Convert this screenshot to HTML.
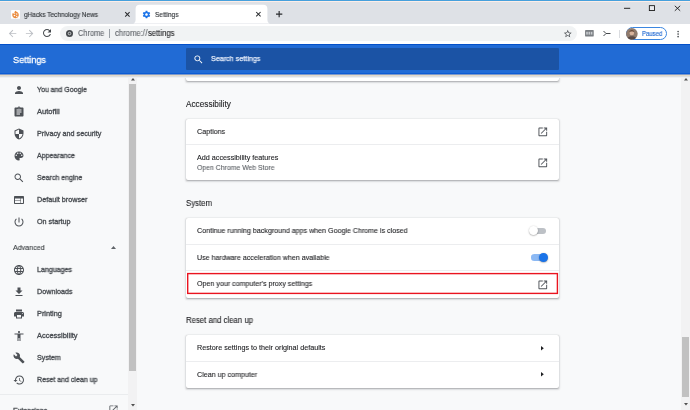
<!DOCTYPE html>
<html><head><meta charset="utf-8"><title>Settings</title>
<style>
html,body{margin:0;padding:0;}
body{width:690px;height:410px;overflow:hidden;position:relative;background:#f8f9fa;font-family:"Liberation Sans",sans-serif;color:#202124;}
.a{position:absolute;}
.t{position:absolute;white-space:nowrap;line-height:10px;height:10px;transform-origin:0 50%;will-change:transform;}
svg{position:absolute;display:block;overflow:visible;}
#topline{left:0;top:0;width:690px;height:2px;background:linear-gradient(#47a0dc 0,#47a0dc 1px,#fdeee8 1px);}
#tabbar{left:0;top:1px;width:690px;height:23px;background:#dee1e6;}

#toolbar{left:0;top:23.5px;width:690px;height:20.5px;background:#fff;}
#omni{left:59.6px;top:25.9px;width:517.4px;height:15px;border-radius:8px;background:#f1f3f4;}
#hdr{left:0;top:44px;width:690px;height:30px;background:linear-gradient(#0450c9 0,#0450c9 1px,#216bd5 1px,#216bd5 29px,#0b5cd5 29px);}
#hdr2{left:0;top:74px;width:690px;height:2px;background:linear-gradient(#7d98c8 0,#7d98c8 1px,#e3d9c7 1px);}
#hdr3{left:0;top:76px;width:690px;height:2px;background:linear-gradient(#dcdee1 0,#dcdee1 1px,#eef0f2 1px);}
#srch{left:186px;top:48px;width:373px;height:21.5px;background:#1b53a5;border-radius:1px;}
.sb{background:#f2f2f3;}
.th{background:#c1c1c1;}
.card{background:#fff;border-radius:2px;box-shadow:0 0.55px 1.1px rgba(60,64,67,.28),0 0.55px 1.65px 0.55px rgba(60,64,67,.13);}
.sep{background:#ecedef;height:1px;}
.ic{fill:#5f6368;}
</style></head><body>
<div class="a" id="tabbar"></div>
<div class="a" id="topline"></div>
<svg style="left:0;top:0" width="690" height="24" viewBox="0 0 690 24"><path d="M131.600 23.600C134.100 23.600 135.600 22.200 135.600 19.700V8.800C135.600 6.300 137.100 4.800 139.600 4.800H263.400C265.900 4.800 267.400 6.300 267.400 8.800V19.700C267.400 22.200 268.900 23.600 271.400 23.600Z" fill="#fff"/></svg>
<div class="a" id="toolbar"></div>
<div class="a" id="omni"></div>

<!-- main cards -->
<div class="a card" style="left:185.8px;top:60px;width:373.4px;height:20.6px;"></div>
<div class="a card" style="left:185.8px;top:118.5px;width:373.4px;height:61.1px;"></div>
<div class="a sep" style="left:186px;top:144.3px;width:373px;"></div>
<div class="a card" style="left:185.8px;top:217.5px;width:373.4px;height:80px;"></div>
<div class="a sep" style="left:186px;top:244.1px;width:373px;"></div>
<div class="a sep" style="left:186px;top:270px;width:373px;"></div>
<svg style="left:0;top:0" width="690" height="410" viewBox="0 0 690 410"><rect x="187.7" y="273.6" width="369.7" height="19.8" fill="none" stroke="#ea1420" stroke-width="1.4"/></svg>
<div class="a card" style="left:185.8px;top:334.5px;width:373.4px;height:53px;"></div>
<div class="a sep" style="left:186px;top:360.8px;width:373px;"></div>

<div class="a" id="hdr"></div><div class="a" id="hdr2"></div><div class="a" id="hdr3"></div>
<div class="a" id="srch"></div>
<div class="a" style="left:109px;top:29px;width:1px;height:9px;background:#9aa0a6;"></div>
<div class="a sep" style="left:0;top:394.2px;width:128.3px;background:#eaecee;"></div>

<!-- ICONS -->
<svg style="left:12.9px;top:83.7px" width="12" height="12" viewBox="0 0 24 24"><path fill="#4d5156" d="M12 12c2.21 0 4-1.79 4-4s-1.79-4-4-4-4 1.79-4 4 1.79 4 4 4zm0 2c-2.67 0-8 1.34-8 4v2h16v-2c0-2.66-5.33-4-8-4z"/></svg>
<svg style="left:12.9px;top:105.7px" width="12" height="12" viewBox="0 0 24 24"><path fill="#4d5156" d="M19 3h-4.18C14.4 1.84 13.3 1 12 1c-1.3 0-2.4.84-2.82 2H5c-1.1 0-2 .9-2 2v14c0 1.1.9 2 2 2h14c1.1 0 2-.9 2-2V5c0-1.1-.9-2-2-2zm-7 0c.55 0 1 .45 1 1s-.45 1-1 1-1-.45-1-1 .45-1 1-1zm2 14H7v-2h7v2zm3-4H7v-2h10v2zm0-4H7V7h10v2z"/></svg>
<svg style="left:12.9px;top:127.7px" width="12" height="12" viewBox="0 0 24 24"><path fill="#4d5156" d="M12 1L3 5v6c0 5.55 3.84 10.74 9 12 5.16-1.26 9-6.45 9-12V5l-9-4zm0 10.99h7c-.53 4.12-3.28 7.79-7 8.94V12H5V6.3l7-3.11v8.8z"/></svg>
<svg style="left:12.9px;top:149.7px" width="12" height="12" viewBox="0 0 24 24"><path fill="#4d5156" d="M12 3c-4.97 0-9 4.03-9 9s4.03 9 9 9c.83 0 1.5-.67 1.5-1.5 0-.39-.15-.74-.39-1.01-.23-.26-.38-.61-.38-.99 0-.83.67-1.5 1.5-1.5H16c2.76 0 5-2.24 5-5 0-4.42-4.03-8-9-8zm-5.5 9c-.83 0-1.5-.67-1.5-1.5S5.67 9 6.5 9 8 9.67 8 10.5 7.33 12 6.5 12zm3-4C8.67 8 8 7.33 8 6.5S8.67 5 9.5 5s1.5.67 1.5 1.5S10.33 8 9.5 8zm5 0c-.83 0-1.5-.67-1.5-1.5S13.67 5 14.5 5s1.5.67 1.5 1.5S15.33 8 14.5 8zm3 4c-.83 0-1.5-.67-1.5-1.5S16.67 9 17.5 9s1.5.67 1.5 1.5-.67 1.5-1.5 1.5z"/></svg>
<svg style="left:12.9px;top:171.7px" width="12" height="12" viewBox="0 0 24 24"><path fill="#4d5156" d="M15.5 14h-.79l-.28-.27C15.41 12.59 16 11.11 16 9.5 16 5.91 13.09 3 9.5 3S3 5.91 3 9.5 5.91 16 9.5 16c1.61 0 3.09-.59 4.23-1.57l.27.28v.79l5 4.99L20.49 19l-4.99-5zm-6 0C7.01 14 5 11.99 5 9.5S7.01 5 9.5 5 14 7.01 14 9.5 11.99 14 9.5 14z"/></svg>
<svg style="left:12.9px;top:193.7px" width="12" height="12" viewBox="0 0 24 24"><path fill="#4d5156" d="M20 4H4c-1.1 0-1.99.9-1.99 2L2 18c0 1.1.9 2 2 2h16c1.1 0 2-.9 2-2V6c0-1.1-.9-2-2-2zm-5 14H4v-4h11v4zm0-5H4V9h11v4zm5 5h-4V9h4v9z"/></svg>
<svg style="left:12.9px;top:215.7px" width="12" height="12" viewBox="0 0 24 24"><path fill="#4d5156" d="M13 3h-2v10h2V3zm4.83 2.17l-1.42 1.42C17.99 7.86 19 9.81 19 12c0 3.87-3.13 7-7 7s-7-3.13-7-7c0-2.19 1.01-4.14 2.58-5.42L6.17 5.17C4.23 6.82 3 9.26 3 12c0 4.97 4.03 9 9 9s9-4.03 9-9c0-2.74-1.23-5.18-3.17-6.83z"/></svg>
<svg style="left:12.9px;top:263.7px" width="12" height="12" viewBox="0 0 24 24"><path fill="#4d5156" d="M11.99 2C6.47 2 2 6.48 2 12s4.47 10 9.99 10C17.52 22 22 17.52 22 12S17.52 2 11.99 2zm6.93 6h-2.95c-.32-1.25-.78-2.45-1.38-3.56 1.84.63 3.37 1.91 4.33 3.56zM12 4.04c.83 1.2 1.48 2.53 1.91 3.96h-3.82c.43-1.43 1.08-2.76 1.91-3.96zM4.26 14C4.1 13.36 4 12.69 4 12s.1-1.36.26-2h3.38c-.08.66-.14 1.32-.14 2 0 .68.06 1.34.14 2H4.26zm.82 2h2.95c.32 1.25.78 2.45 1.38 3.56-1.84-.63-3.37-1.9-4.33-3.56zm2.95-8H5.08c.96-1.66 2.49-2.93 4.33-3.56C8.81 5.55 8.35 6.75 8.03 8zM12 19.96c-.83-1.2-1.48-2.53-1.91-3.96h3.82c-.43 1.43-1.08 2.76-1.91 3.96zM14.34 14H9.66c-.09-.66-.16-1.32-.16-2 0-.68.07-1.35.16-2h4.68c.09.65.16 1.32.16 2 0 .68-.07 1.34-.16 2zm.25 5.56c.6-1.11 1.06-2.31 1.38-3.56h2.95c-.96 1.65-2.49 2.93-4.33 3.56zM16.36 14c.08-.66.14-1.32.14-2 0-.68-.06-1.34-.14-2h3.38c.16.64.26 1.31.26 2s-.1 1.36-.26 2h-3.38z"/></svg>
<svg style="left:12.9px;top:285.7px" width="12" height="12" viewBox="0 0 24 24"><path fill="#4d5156" d="M19 9h-4V3H9v6H5l7 7 7-7zM5 18v2h14v-2H5z"/></svg>
<svg style="left:12.9px;top:307.7px" width="12" height="12" viewBox="0 0 24 24"><path fill="#4d5156" d="M19 8H5c-1.66 0-3 1.34-3 3v6h4v4h12v-4h4v-6c0-1.66-1.34-3-3-3zm-3 11H8v-5h8v5zm3-7c-.55 0-1-.45-1-1s.45-1 1-1 1 .45 1 1-.45 1-1 1zm-1-9H6v4h12V3z"/></svg>
<svg style="left:12.9px;top:329.7px" width="12" height="12" viewBox="0 0 24 24"><path fill="#4d5156" d="M12 2c1.1 0 2 .9 2 2s-.9 2-2 2-2-.9-2-2 .9-2 2-2zm9 7h-6v13h-2v-6h-2v6H9V9H3V7h18v2z"/></svg>
<svg style="left:12.9px;top:351.7px" width="12" height="12" viewBox="0 0 24 24"><path fill="#4d5156" d="M22.7 19l-9.1-9.1c.9-2.3.4-5-1.5-6.9-2-2-5-2.4-7.4-1.3L9 6 6 9 1.6 4.700C.4 7.1.9 10.1 2.9 12.1c1.900 1.900 4.600 2.400 6.900 1.500l9.100 9.100c.4.400 1 .400 1.400 0l2.300-2.300c.500-.400.500-1.100.100-1.400z"/></svg>
<svg style="left:12.9px;top:373.7px" width="12" height="12" viewBox="0 0 24 24"><path fill="#4d5156" d="M13 3c-4.970 0-9 4.030-9 9H1l3.890 3.890.07.140L9 12H6c0-3.870 3.130-7 7-7s7 3.130 7 7-3.130 7-7 7c-1.930 0-3.680-.790-4.940-2.060l-1.420 1.420C8.270 19.990 10.510 21 13 21c4.970 0 9-4.030 9-9s-4.030-9-9-9zm-1 5v5l4.280 2.540.72-1.210-3.500-2.080V8H12z"/></svg>
<svg style="left:536.9px;top:126.3px" width="11.6" height="11.6" viewBox="0 0 24 24"><path fill="#50545a" d="M19 19H5V5h7V3H5c-1.110 0-2 .9-2 2v14c0 1.100.89 2 2 2h14c1.100 0 2-.9 2-2v-7h-2v7zM14 3v2h3.590l-9.830 9.830 1.410 1.410L19 6.410V10h2V3h-7z"/></svg>
<svg style="left:536.9px;top:157.1px" width="11.6" height="11.6" viewBox="0 0 24 24"><path fill="#50545a" d="M19 19H5V5h7V3H5c-1.110 0-2 .9-2 2v14c0 1.100.89 2 2 2h14c1.100 0 2-.9 2-2v-7h-2v7zM14 3v2h3.590l-9.830 9.830 1.410 1.410L19 6.410V10h2V3h-7z"/></svg>
<svg style="left:536.9px;top:278.6px" width="11.6" height="11.6" viewBox="0 0 24 24"><path fill="#50545a" d="M19 19H5V5h7V3H5c-1.110 0-2 .9-2 2v14c0 1.100.89 2 2 2h14c1.100 0 2-.9 2-2v-7h-2v7zM14 3v2h3.590l-9.830 9.830 1.410 1.410L19 6.410V10h2V3h-7z"/></svg>
<svg style="left:108.1px;top:404.2px" width="11" height="11" viewBox="0 0 24 24"><path fill="#5f6368" d="M19 19H5V5h7V3H5c-1.110 0-2 .9-2 2v14c0 1.100.89 2 2 2h14c1.100 0 2-.9 2-2v-7h-2v7zM14 3v2h3.590l-9.830 9.830 1.410 1.410L19 6.410V10h2V3h-7z"/></svg>
<svg style="left:540.8px;top:345.6px" width="2.8" height="4.4" viewBox="0 0 2.8 4.4"><path d="M0 0L2.8 2.2L0 4.4z" fill="#202124"/></svg>
<svg style="left:540.8px;top:372.1px" width="2.8" height="4.4" viewBox="0 0 2.8 4.4"><path d="M0 0L2.8 2.2L0 4.4z" fill="#202124"/></svg>
<svg style="left:111px;top:246px" width="5" height="3" viewBox="0 0 5 3"><path d="M0 3L2.5 0L5 3z" fill="#5f6368"/></svg>
<svg style="left:192.5px;top:53.5px" width="11" height="11" viewBox="0 0 24 24"><path fill="#fff" d="M15.5 14h-.79l-.28-.27C15.41 12.59 16 11.11 16 9.5 16 5.91 13.09 3 9.5 3S3 5.91 3 9.5 5.91 16 9.5 16c1.61 0 3.09-.59 4.23-1.57l.27.28v.79l5 4.99L20.49 19l-4.99-5zm-6 0C7.01 14 5 11.99 5 9.5S7.01 5 9.5 5 14 7.01 14 9.5 11.99 14 9.5 14z"/></svg>
<svg style="left:6.5px;top:27.9px" width="11.2" height="11.2" viewBox="0 0 24 24"><path fill="#bcbfc4" d="M20 11H7.830l5.590-5.590L12 4l-8 8 8 8 1.410-1.410L7.830 13H20v-2z"/></svg>
<svg style="left:24.0px;top:27.9px" width="11.2" height="11.2" viewBox="0 0 24 24"><path fill="#bcbfc4" d="M12 4l-1.410 1.410L16.170 11H4v2h12.170l-5.580 5.590L12 20l8-8z"/></svg>
<svg style="left:41.0px;top:27.4px" width="12" height="12" viewBox="0 0 24 24"><path fill="#45494d" d="M17.650 6.350C16.200 4.900 14.210 4 12 4c-4.420 0-7.990 3.580-7.990 8s3.570 8 7.990 8c3.730 0 6.840-2.550 7.730-6h-2.080c-.820 2.330-3.040 4-5.650 4-3.310 0-6-2.690-6-6s2.690-6 6-6c1.660 0 3.140.690 4.220 1.780L13 11h7V4l-2.350 2.350z"/></svg>
<svg style="left:562.5px;top:28.9px" width="9.5" height="9.5" viewBox="0 0 24 24"><path fill="#45494d" d="M22 9.240l-7.190-.620L12 2 9.190 8.630 2 9.240l5.460 4.730L5.820 21 12 17.270 18.180 21l-1.630-7.030L22 9.240zM12 15.400l-3.760 2.270 1-4.280-3.320-2.880 4.380-.380L12 6.100l1.710 4.040 4.380.380-3.320 2.880 1 4.280L12 15.400z"/></svg>
<svg style="left:672.9px;top:28.5px" width="10.2" height="10.2" viewBox="0 0 24 24"><path fill="#45494d" d="M12 8c1.100 0 2-.9 2-2s-.9-2-2-2-2 .9-2 2 .9 2 2 2zm0 2c-1.100 0-2 .9-2 2s.9 2 2 2 2-.9 2-2-.9-2-2-2zm0 6c-1.100 0-2 .9-2 2s.9 2 2 2 2-.9 2-2-.9-2-2-2z"/></svg>
<svg style="left:141.9px;top:9.6px" width="9" height="9" viewBox="0 0 24 24"><path fill="#1a73e8" d="M19.430 12.980c.040-.320.070-.640.070-.980s-.030-.660-.070-.980l2.110-1.650c.190-.150.240-.420.120-.640l-2-3.460c-.120-.220-.390-.300-.610-.220l-2.490 1c-.520-.400-1.080-.730-1.690-.980l-.380-2.650C14.460 2.180 14.250 2 14 2h-4c-.250 0-.460.180-.490.420l-.380 2.650c-.610.250-1.170.590-1.690.980l-2.490-1c-.230-.090-.490 0-.610.220l-2 3.460c-.130.220-.070.490.120.640l2.110 1.650c-.040.320-.070.650-.070.980s.030.660.070.980l-2.110 1.650c-.190.150-.240.420-.120.640l2 3.460c.120.220.390.300.610.220l2.490-1c.520.400 1.080.730 1.690.980l.380 2.650c.030.240.240.420.490.420h4c.250 0 .460-.180.490-.420l.380-2.650c.610-.250 1.170-.590 1.690-.980l2.490 1c.230.090.490 0 .610-.220l2-3.460c.120-.220.070-.490-.120-.640l-2.110-1.650zM12 15.500c-1.930 0-3.500-1.570-3.500-3.500s1.570-3.500 3.500-3.500 3.500 1.570 3.500 3.500-1.570 3.500-3.500 3.500z"/></svg>
<svg style="left:65.5px;top:29.9px" width="7" height="7" viewBox="0 0 14 14"><circle cx="7" cy="7" r="7" fill="#45494d"/><circle cx="7" cy="7" r="2.6" fill="none" stroke="#f1f3f4" stroke-width="1.4"/></svg>
<svg style="left:11px;top:9.8px" width="9" height="8.8" viewBox="0 0 18 17.6"><rect width="18" height="17.600" rx="1" fill="#fff"/><path d="M9 1.500c1 1.500 3 2 4.500 3.500 2 2 2.500 5 1.500 7.500-1 2.500-3.500 4-6 4s-5-1.500-6-4c-1-2.500-.5-5 1-7 .5 1.500 1.500 2 2.500 2 0-2.500 1-4.500 2.500-6z" fill="#ea8a3c"/><circle cx="7" cy="11" r="1.700" fill="#fff"/><circle cx="11.500" cy="8" r="1.400" fill="#fff"/><circle cx="11.500" cy="13" r="1.300" fill="#fff"/><circle cx="7.500" cy="6.500" r="1" fill="#fff"/></svg>
<svg style="left:0;top:0" width="690" height="24" viewBox="0 0 690 24"><path d="M624 8.3H630.2" stroke="#1b1b1b" stroke-width="0.95" fill="none"/><rect x="649.35" y="5.65" width="5.2" height="4.9" stroke="#1b1b1b" stroke-width="0.9" fill="#e8eaee"/><path d="M674.8 5.8L680.2 10.8M680.2 5.8L674.8 10.8" stroke="#1b1b1b" stroke-width="0.9" fill="none"/><path d="M125.2 12.2L129.6 16.6M129.6 12.2L125.2 16.6" stroke="#2a2c2f" stroke-width="1.05" fill="none"/><path d="M256.2 12L260.6 16.4M260.6 12L256.2 16.4" stroke="#2a2c2f" stroke-width="1.05" fill="none"/><path d="M276 14.1H282.3M279.15 10.95V17.25" stroke="#2a2c2f" stroke-width="1.15" fill="none"/></svg>
<svg style="left:584.6px;top:30.3px" width="8.8" height="6.4" viewBox="0 0 19 14"><rect width="19" height="14" rx="1" fill="#7b7f83"/><rect x="2.500" y="4" width="3.500" height="6" fill="#c9ccd0"/><rect x="7.500" y="4" width="3.500" height="6" fill="#c9ccd0"/><rect x="12.500" y="4" width="3.500" height="6" fill="#c9ccd0"/></svg>
<svg style="left:602.500px;top:30px" width="8" height="7" viewBox="0 0 16 14"><path d="M1 2L6 7L1 12M6 7H15" stroke="#45494d" stroke-width="2" fill="none"/></svg>
<div class="a" style="left:618.500px;top:29.500px;width:1px;height:8px;background:#dadce0;"></div>
<div class="a" style="left:625.6px;top:26.9px;width:39.1px;height:11.05px;border:0.9px solid #3b86e0;border-radius:7px;background:#fff;"></div>
<svg style="left:625.5px;top:27.5px" width="11.7" height="11.7" viewBox="0 0 20 20"><circle cx="10" cy="10" r="10" fill="#8f7a6c"/><circle cx="10" cy="8.500" r="4" fill="#d9b49c"/><path d="M3 17c1.500-4 12.500-4 14 0a10 10 0 0 1-14 0z" fill="#5a4a44"/><path d="M5.500 8c0-6 9-6 9 0c-1-2.500-8-2.500-9 0z" fill="#6a4a38"/></svg>

<div class="t" style="left:24.0px;top:10px;font-size:6.9px;color:#33373b;-webkit-text-stroke:0.15px #33373b;transform:scaleX(0.9393);">gHacks Technology News</div>
<div class="t" style="left:155.0px;top:10px;font-size:6.9px;color:#33373b;-webkit-text-stroke:0.15px #33373b;transform:scaleX(0.9435);">Settings</div>
<div class="t" style="left:78.2px;top:29px;font-size:8.2px;color:#5f6368;-webkit-text-stroke:0.12px #5f6368;transform:scaleX(0.9030);">Chrome</div>
<div class="t" style="left:115.0px;top:29px;font-size:8.2px;color:#5f6368;-webkit-text-stroke:0.12px #5f6368;transform:scaleX(0.9421);">chrome:<span style="letter-spacing:0.4px">//</span><span style="color:#202124;-webkit-text-stroke:0.1px #202124">settings</span></div>
<div class="t" style="left:641.8px;top:29px;font-size:7.1px;color:#1f68d2;-webkit-text-stroke:0.15px #1f68d2;transform:scaleX(0.8436);">Paused</div>
<div class="t" style="left:13.1px;top:55px;font-size:9.6px;color:#fff;-webkit-text-stroke:0.3px #fff;transform:scaleX(0.9518);">Settings</div>
<div class="t" style="left:210.9px;top:54px;font-size:7.4px;color:#e6edfa;-webkit-text-stroke:0.25px #e6edfa;transform:scaleX(0.9676);">Search settings</div>
<div class="t" style="left:37.4px;top:85px;font-size:7.2px;color:#484c51;-webkit-text-stroke:0.32px #484c51;transform:scaleX(0.9728);">You and Google</div>
<div class="t" style="left:37.4px;top:107px;font-size:7.2px;color:#484c51;-webkit-text-stroke:0.32px #484c51;transform:scaleX(1.0520);">Autofill</div>
<div class="t" style="left:37.4px;top:129px;font-size:7.2px;color:#484c51;-webkit-text-stroke:0.32px #484c51;transform:scaleX(0.9998);">Privacy and security</div>
<div class="t" style="left:37.4px;top:151px;font-size:7.2px;color:#484c51;-webkit-text-stroke:0.32px #484c51;transform:scaleX(0.9777);">Appearance</div>
<div class="t" style="left:37.4px;top:173px;font-size:7.2px;color:#484c51;-webkit-text-stroke:0.32px #484c51;transform:scaleX(0.9793);">Search engine</div>
<div class="t" style="left:37.4px;top:195px;font-size:7.2px;color:#484c51;-webkit-text-stroke:0.32px #484c51;transform:scaleX(1.0011);">Default browser</div>
<div class="t" style="left:37.4px;top:217px;font-size:7.2px;color:#484c51;-webkit-text-stroke:0.32px #484c51;transform:scaleX(1.0011);">On startup</div>
<div class="t" style="left:13.2px;top:243px;font-size:7.6px;color:#3c4043;-webkit-text-stroke:0.12px #3c4043;transform:scaleX(0.9384);">Advanced</div>
<div class="t" style="left:37.4px;top:265px;font-size:7.2px;color:#484c51;-webkit-text-stroke:0.32px #484c51;transform:scaleX(0.9809);">Languages</div>
<div class="t" style="left:37.4px;top:287px;font-size:7.2px;color:#484c51;-webkit-text-stroke:0.32px #484c51;transform:scaleX(0.9954);">Downloads</div>
<div class="t" style="left:37.4px;top:309px;font-size:7.2px;color:#484c51;-webkit-text-stroke:0.32px #484c51;transform:scaleX(1.0215);">Printing</div>
<div class="t" style="left:37.4px;top:331px;font-size:7.2px;color:#484c51;-webkit-text-stroke:0.32px #484c51;transform:scaleX(1.0369);">Accessibility</div>
<div class="t" style="left:37.4px;top:353px;font-size:7.2px;color:#484c51;-webkit-text-stroke:0.32px #484c51;transform:scaleX(0.9846);">System</div>
<div class="t" style="left:37.4px;top:375px;font-size:7.2px;color:#484c51;-webkit-text-stroke:0.32px #484c51;transform:scaleX(0.9752);">Reset and clean up</div>
<div class="t" style="left:13.2px;top:406px;font-size:7.2px;color:#484c51;-webkit-text-stroke:0.32px #484c51;transform:scaleX(0.9752);">Extensions</div>
<div class="t" style="left:186.0px;top:100px;font-size:8.2px;color:#202124;-webkit-text-stroke:0.1px #202124;transform:scaleX(1.0046);">Accessibility</div>
<div class="t" style="left:197.0px;top:127px;font-size:7.2px;color:#202124;-webkit-text-stroke:0.1px #202124;transform:scaleX(0.9903);">Captions</div>
<div class="t" style="left:197.0px;top:153px;font-size:7.2px;color:#202124;-webkit-text-stroke:0.1px #202124;transform:scaleX(1.0024);">Add accessibility features</div>
<div class="t" style="left:197.0px;top:163px;font-size:7.2px;color:#585c61;-webkit-text-stroke:0.1px #585c61;transform:scaleX(0.9572);">Open Chrome Web Store</div>
<div class="t" style="left:186.0px;top:199px;font-size:8.2px;color:#202124;-webkit-text-stroke:0.1px #202124;transform:scaleX(0.9519);">System</div>
<div class="t" style="left:197.0px;top:226px;font-size:7.2px;color:#202124;-webkit-text-stroke:0.1px #202124;transform:scaleX(0.9847);">Continue running background apps when Google Chrome is closed</div>
<div class="t" style="left:197.0px;top:253px;font-size:7.2px;color:#202124;-webkit-text-stroke:0.1px #202124;transform:scaleX(0.9811);">Use hardware acceleration when available</div>
<div class="t" style="left:197.0px;top:279px;font-size:7.2px;color:#202124;-webkit-text-stroke:0.1px #202124;transform:scaleX(0.9861);">Open your computer's proxy settings</div>
<div class="t" style="left:186.0px;top:316px;font-size:8.2px;color:#202124;-webkit-text-stroke:0.1px #202124;transform:scaleX(0.9495);">Reset and clean up</div>
<div class="t" style="left:197.0px;top:343px;font-size:7.2px;color:#202124;-webkit-text-stroke:0.1px #202124;transform:scaleX(1.0012);">Restore settings to their original defaults</div>
<div class="t" style="left:197.0px;top:370px;font-size:7.2px;color:#202124;-webkit-text-stroke:0.1px #202124;transform:scaleX(0.9912);">Clean up computer</div>

<!-- toggles -->
<div class="a" style="left:530.9px;top:227.5px;width:15.4px;height:6.6px;border-radius:3.3px;background:#bdc1c6;"></div>
<div class="a" style="left:529.2px;top:226.4px;width:8.8px;height:8.8px;border-radius:4.4px;background:#fff;box-shadow:0 0.5px 1.6px rgba(0,0,0,.4);"></div>
<div class="a" style="left:530.9px;top:254.1px;width:15.4px;height:6.6px;border-radius:3.3px;background:#8cb9f4;"></div>
<div class="a" style="left:539.2px;top:253px;width:8.8px;height:8.8px;border-radius:4.4px;background:#1a73e8;box-shadow:0 0.5px 1.6px rgba(0,0,0,.4);"></div>

<!-- scrollbars -->
<div class="a sb" style="left:128.3px;top:78px;width:8.5px;height:332px;"></div>
<div class="a th" style="left:129px;top:84.1px;width:7px;height:286.6px;"></div>
<div class="a sb" style="left:680.8px;top:78px;width:9.2px;height:332px;"></div>
<div class="a th" style="left:682px;top:337.1px;width:7px;height:60px;"></div>
<svg style="left:130.5px;top:78.4px" width="4" height="2.6" viewBox="0 0 4 2.6"><path d="M0 2.6L2 0L4 2.6z" fill="#505050"/></svg>
<svg style="left:130.5px;top:403.6px" width="4" height="2.6" viewBox="0 0 4 2.6"><path d="M0 0L2 2.6L4 0z" fill="#505050"/></svg>
<svg style="left:683.6px;top:78.4px" width="4" height="2.6" viewBox="0 0 4 2.6"><path d="M0 2.6L2 0L4 2.6z" fill="#505050"/></svg>
<svg style="left:683.6px;top:403.2px" width="4" height="2.6" viewBox="0 0 4 2.6"><path d="M0 0L2 2.6L4 0z" fill="#505050"/></svg>

</body></html>
